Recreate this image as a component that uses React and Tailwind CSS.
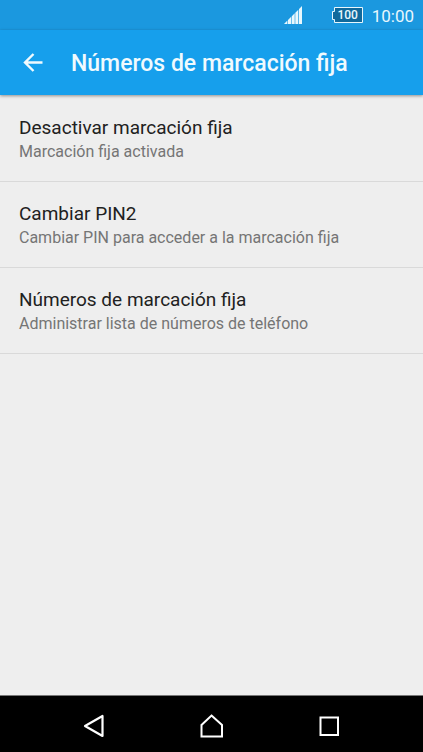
const settings = [
  { title: "Desactivar marcación fija", summary: "Marcación fija activada" },
  { title: "Cambiar PIN2", summary: "Cambiar PIN para acceder a la marcación fija" },
  { title: "Números de marcación fija", summary: "Administrar lista de números de teléfono" }
];

const StatusBar = () => (
  <div className="flex h-[30px] items-center justify-end bg-[#1b98df] pr-[9px] text-[#e8f7fd]">
    <svg className="mr-[29px] h-[18px] w-[18px]" viewBox="0 0 18 18" fill="currentColor" aria-hidden="true">
      <path d="M0 18L3.400 14.600V18zM4 18V14L7.200 10.800V18zM7.800 18V10.200L10.700 7.300V18zM11.300 18V6.700L14.300 3.700V18zM15 18V3L18 0V18z" />
    </svg>
    <div className="relative mr-[8px] flex h-[17px] w-[33px] items-center justify-center">
      <svg className="absolute inset-0 h-full w-full" viewBox="0 0 33 17" fill="#10699c" stroke="currentColor" aria-hidden="true">
        <path d="M3.500 0.500H31.500V15.500H3.500V12.500H1.500V4.500H3.500z" />
      </svg>
      <span className="relative pl-px text-[12px] leading-[17px] font-medium">100</span>
    </div>
    <span className="pt-px text-[17px] leading-7">10:00</span>
  </div>
);

const AppBar = () => (
  <header className="relative flex h-[65px] items-center bg-[#169fec] pl-[21px] text-[#f0fafe] shadow-[0_1px_3px_rgba(0,0,0,0.4)]">
    <button type="button" aria-label="Atrás" className="mr-[26px] flex h-6 w-6 items-center justify-center">
      <svg className="h-6 w-6" viewBox="0 0 24 24" fill="none" stroke="currentColor" strokeWidth="2.400" aria-hidden="true">
        <path d="M21.500 11.500H4M12.500 3L4 11.500l8.500 8.500" />
      </svg>
    </button>
    <h1 className="pt-[3px] text-[23px] leading-7 font-medium">Números de marcación fija</h1>
  </header>
);

const SettingItem = ({ title, summary }) => (
  <li className="border-b border-[#d9d9d9]">
    <button type="button" className="block w-full px-[19px] pt-5 pb-[17px] text-left">
      <span className="block text-[19px] leading-6 text-[#212121]">{title}</span>
      <span className="block text-[16px] leading-6 text-[#757575]">{summary}</span>
    </button>
  </li>
);

const NavBar = () => (
  <nav className="flex h-[57px] items-center justify-center gap-[94px] border-t border-[#777777] bg-black pt-[3px] text-white">
    <button type="button" aria-label="Atrás">
      <svg className="h-6 w-6" viewBox="0 0 24 24" fill="none" stroke="currentColor" strokeWidth="2.200" strokeLinejoin="round" aria-hidden="true">
        <path d="M20.500 2v20L3 12z" />
      </svg>
    </button>
    <button type="button" aria-label="Inicio">
      <svg className="h-6 w-6" viewBox="0 0 24 24" fill="none" stroke="currentColor" strokeWidth="2" aria-hidden="true">
        <path d="M11.500 1.500L22 11V22.500H1.500V11z" />
      </svg>
    </button>
    <button type="button" aria-label="Recientes">
      <svg className="h-6 w-6" viewBox="0 0 24 24" fill="none" stroke="currentColor" strokeWidth="2" aria-hidden="true">
        <path d="M2.500 3.500H20V21H2.500z" />
      </svg>
    </button>
  </nav>
);

const App = () => (
  <div className="flex min-h-screen flex-col bg-[#eeeeee] font-[Roboto,sans-serif]">
    <StatusBar />
    <AppBar />
    <main className="flex-1 pt-px">
      <ul>
        {settings.map((item) => (
          <SettingItem key={item.title} title={item.title} summary={item.summary} />
        ))}
      </ul>
    </main>
    <NavBar />
  </div>
);

export default App;
